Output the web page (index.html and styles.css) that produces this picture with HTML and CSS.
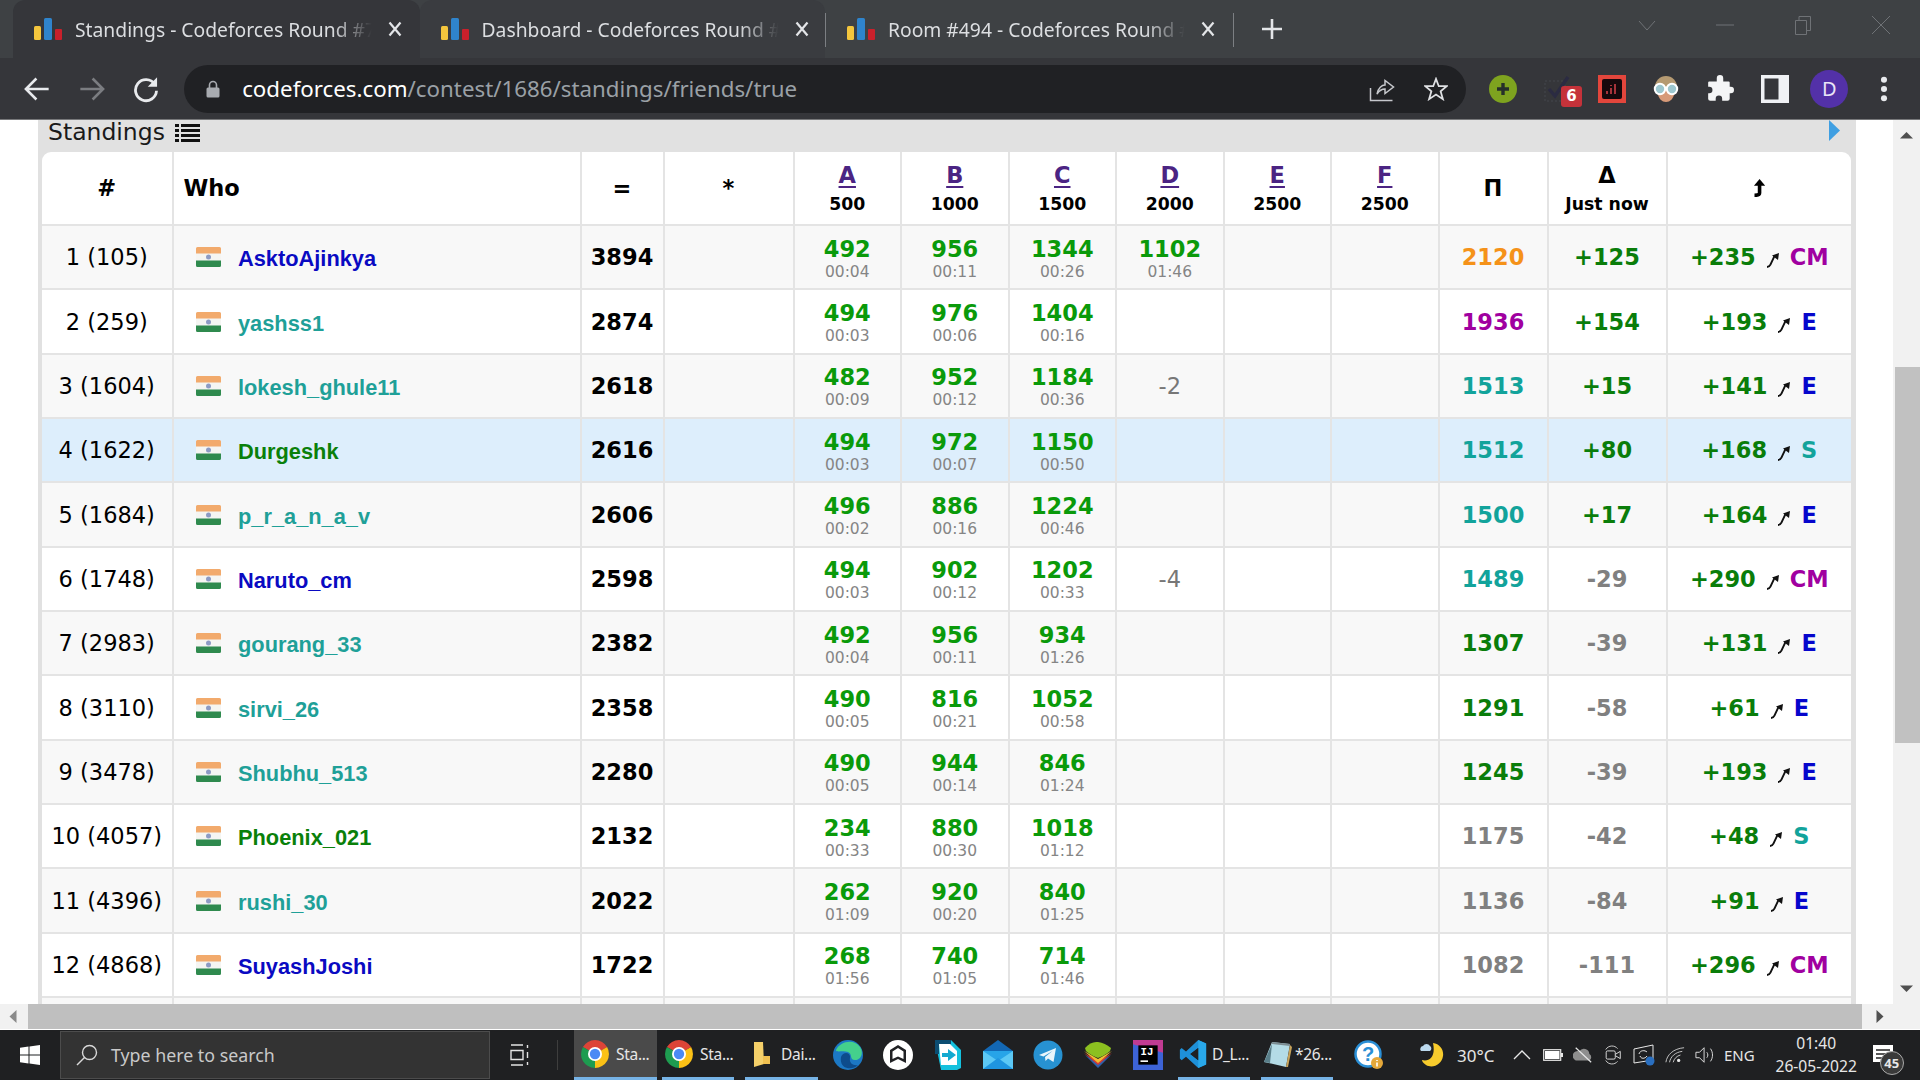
FILE: index.html
```html
<!DOCTYPE html>
<html lang="en">
<head>
    <meta charset="UTF-8">
    <meta name="viewport" content="width=device-width, initial-scale=1.0">
    <title>Standings - Codeforces Round #794 (Div. 2)</title>
    <link rel="stylesheet" href="styles.css">
</head>
<body>
    <svg class="defs" width="0" height="0">
        <symbol id="fav" viewBox="0 0 28 22">
            <rect x="0" y="8" width="7" height="14" rx="1.5" fill="#f4c63d"/>
            <rect x="10" y="0" width="8" height="22" rx="1.5" fill="#2f84cc"/>
            <rect x="21" y="11" width="7" height="11" rx="1" fill="#c9202b"/>
        </symbol>
        <symbol id="close" viewBox="0 0 14 16">
            <path d="M1.5 1.5 12.5 14.5M12.5 1.5 1.5 14.5" stroke="#e3e5e8" stroke-width="2.2" fill="none"/>
        </symbol>
        <symbol id="flag" viewBox="0 0 25 20">
            <rect x="0" y="0" width="25" height="20" rx="1.5" fill="#f5f5f2"/>
            <path d="M0 1.5A1.5 1.5 0 0 1 1.500 0h22A1.500 1.500 0 0 1 25 1.500V6.500H0z" fill="#f2aa6c"/>
            <path d="M0 13.500H25V18.500A1.500 1.500 0 0 1 23.500 20h-22A1.500 1.500 0 0 1 0 18.500z" fill="#2f8a4e"/>
            <circle cx="12.500" cy="10" r="2.500" fill="#8d9bc4"/>
        </symbol>
        <symbol id="rise" viewBox="0 0 14 16">
            <path d="M1 15C2.500 15 3.500 14.500 4.500 12.500L8.500 4" stroke="#111" stroke-width="1.800" fill="none"/>
            <path d="M6 3.500 13 1 12 8z" fill="#111"/>
        </symbol>
        <symbol id="chrome" viewBox="0 0 28 28">
            <path d="M14 14 1.900 7A14 14 0 0 1 26.100 7z" fill="#dd4437"/>
            <path d="M14 14 1.900 7A14 14 0 0 0 14 28z" fill="#1e9c50"/>
            <path d="M14 14 26.100 7A14 14 0 0 1 14 28z" fill="#fbc116"/>
            <circle cx="14" cy="14" r="7" fill="#fff"/>
            <circle cx="14" cy="14" r="5.200" fill="#4a8af4"/>
        </symbol>
    </svg>

    <div class="tabstrip">
        <div class="tab tab-active">
            <svg class="fav"><use href="#fav"/></svg>
            <span class="tab-title">Standings - Codeforces Round #7</span>
            <svg class="tab-close"><use href="#close"/></svg>
        </div>
        <div class="tab tab-dim">
            <svg class="fav"><use href="#fav"/></svg>
            <span class="tab-title">Dashboard - Codeforces Round #</span>
            <svg class="tab-close"><use href="#close"/></svg>
        </div>
        <div class="tab-sep"></div>
        <div class="tab">
            <svg class="fav"><use href="#fav"/></svg>
            <span class="tab-title">Room #494 - Codeforces Round #</span>
            <svg class="tab-close"><use href="#close"/></svg>
        </div>
        <div class="tab-sep"></div>
        <svg class="new-tab" viewBox="0 0 22 22"><path d="M11 1V21M1 11H21" stroke="#e3e5e8" stroke-width="2.600"/></svg>
        <div class="win-controls">
            <span class="win-btn"><svg viewBox="0 0 20 20"><path d="M2 6 10 15 18 6" stroke="#6f7276" fill="none"/></svg></span>
            <span class="win-btn"><svg viewBox="0 0 20 20"><path d="M1 10H19" stroke="#6f7276"/></svg></span>
            <span class="win-btn"><svg viewBox="0 0 20 20"><path d="M2.500 5.500H13.500V19.500H2.500zM6 5.500V1.500H17.500V15.500H13.500" stroke="#6f7276" fill="none"/></svg></span>
            <span class="win-btn"><svg viewBox="0 0 20 20"><path d="M1 1 19 19M19 1 1 19" stroke="#6f7276" fill="none"/></svg></span>
        </div>
    </div>

    <div class="toolbar">
        <span class="tool"><svg viewBox="0 0 24 24"><path d="M22 12H3M11.500 3 2.500 12l9 9" stroke="#e8eaed" stroke-width="2.200" fill="none"/></svg></span>
        <span class="tool"><svg viewBox="0 0 24 24"><path d="M2 12H21M12.500 3l9 9-9 9" stroke="#7b7d81" stroke-width="2.200" fill="none"/></svg></span>
        <span class="tool"><svg viewBox="0 0 24 24"><path d="M19.500 8A9 9 0 1 0 21 13.500" stroke="#e8eaed" stroke-width="2.400" fill="none"/><path d="M21.500 2V10H13.500z" fill="#e8eaed"/></svg></span>
        <div class="omnibox">
            <svg class="lock" viewBox="0 0 14 18"><path d="M3.500 8V5a3.500 3.500 0 0 1 7 0V8" stroke="#a8abb0" stroke-width="1.600" fill="none"/><rect x="0.500" y="7.500" width="13" height="10" rx="1.500" fill="#a8abb0"/></svg>
            <span class="url"><b>codeforces.com</b>/contest/1686/standings/friends/true</span>
            <svg class="omni-icon omni-share" viewBox="0 0 26 26"><path d="M1.500 12V24.500H23.500M8 18C9 12 13 9 16 9V4.500L24.500 11 16 17.500V13C13 13 10 15 8 18z" stroke="#c6c8cc" stroke-width="1.500" fill="none"/></svg>
            <svg class="omni-icon omni-star" viewBox="0 0 26 26"><path d="M13 2 16 10H24.500L18 15.500 20.500 24 13 19 5.500 24 8 15.500 1.500 10H10z" stroke="#dfe1e4" stroke-width="1.900" fill="none"/></svg>
        </div>
        <div class="ext-row">
            <span class="tool"><svg viewBox="0 0 28 28"><circle cx="14" cy="14" r="14" fill="#7ea31f"/><path d="M14 8V20M8 14H20" stroke="#26302a" stroke-width="3.400"/></svg></span>
            <span class="tool tool-badge">
                <svg viewBox="0 0 28 28"><rect x="2" y="6" width="20" height="20" stroke="#44464c" stroke-dasharray="2 2" fill="none"/><path d="M6 14 12 21 25 2" stroke="#2b2b42" stroke-width="3.400" fill="none"/></svg>
                <span class="badge">6</span>
            </span>
            <span class="tool"><svg viewBox="0 0 28 28"><rect width="28" height="28" fill="#e3463c"/><rect x="4" y="4" width="20" height="20" rx="2" fill="#16090c"/><path d="M9 19V16M13 19V13M13 11V10M17 19V9" stroke="#a6333a" stroke-width="2"/></svg></span>
            <span class="tool"><svg viewBox="0 0 28 28"><circle cx="14" cy="12" r="11" fill="#b59a72"/><path d="M5 15C6 24 10 27 14 27S22 24 23 15z" fill="#d79a78"/><circle cx="8" cy="14" r="5.200" fill="#9dc7cf" stroke="#fff" stroke-width="2"/><circle cx="20" cy="14" r="5.200" fill="#9dc7cf" stroke="#fff" stroke-width="2"/></svg></span>
            <span class="tool"><svg viewBox="0 0 26 26"><path d="M10 3a3 3 0 0 1 6 0V6H21a1 1 0 0 1 1 1V11h1a3 3 0 0 1 0 6H22v5a2 2 0 0 1-2 2H15V22a3 3 0 0 0-6 0v2H4a2 2 0 0 1-2-2V17H3a3 3 0 0 0 0-6H2V7A1 1 0 0 1 3 6H10z" fill="#f4f5f6"/></svg></span>
            <span class="tool"><svg viewBox="0 0 24 24"><rect width="24" height="24" fill="#eff1f4"/><rect x="3" y="3" width="12" height="18" fill="#35363a"/></svg></span>
            <span class="tool"><span class="profile">D</span></span>
            <span class="tool"><svg viewBox="0 0 24 24"><circle cx="12" cy="4" r="2.600" fill="#e8eaed"/><circle cx="12" cy="12" r="2.600" fill="#e8eaed"/><circle cx="12" cy="20" r="2.600" fill="#e8eaed"/></svg></span>
        </div>
    </div>

    <div class="viewport">
        <div class="content">
            <div class="panel">
                <div class="panel-head">
                    <span class="panel-title">Standings</span>
                    <svg class="list-icon" viewBox="0 0 25 18"><path d="M0 0H4V3H0zM6 0H25V3H6zM0 5H4V8H0zM6 5H25V8H6zM0 10H4V13H0zM6 10H25V13H6zM0 15H4V18H0zM6 15H25V18H6z" fill="#111"/></svg>
                    <svg class="next-icon" viewBox="0 0 11 21"><path d="M0 0 11 10.500 0 21z" fill="#3f9fe2"/></svg>
                </div>
                <table class="standings">
                    <colgroup>
                        <col class="c-rank"><col class="c-who"><col class="c-eq"><col class="c-star">
                        <col class="c-prob"><col class="c-prob"><col class="c-prob"><col class="c-prob"><col class="c-prob"><col class="c-prob">
                        <col class="c-pi"><col class="c-delta"><col class="c-rise">
                    </colgroup>
                    <thead>
                        <tr>
                            <th>#</th>
                            <th class="who-head">Who</th>
                            <th>=</th>
                            <th>*</th>
                            <th class="two"><a>A</a><small>500</small></th>
                            <th class="two"><a>B</a><small>1000</small></th>
                            <th class="two"><a>C</a><small>1500</small></th>
                            <th class="two"><a>D</a><small>2000</small></th>
                            <th class="two"><a>E</a><small>2500</small></th>
                            <th class="two"><a>F</a><small>2500</small></th>
                            <th>&Pi;</th>
                            <th class="two">&Delta;<small>Just now</small></th>
                            <th><svg class="up-icon" viewBox="0 0 12 16"><path d="M6.500 4V12.500C6.500 14 5 14.500 2 14.500" stroke="#000" stroke-width="3.200" fill="none"/><path d="M6.500 0 11.500 6H1.500z" fill="#000"/></svg></th>
                        </tr>
                    </thead>
                    <tbody>
                        <tr>
                            <td class="rank">1 (105)</td>
                            <td class="who"><svg class="flag"><use href="#flag"/></svg><span class="rated-blue">AsktoAjinkya</span></td>
                            <td class="total">3894</td><td></td>
                            <td class="ok">492<small>00:04</small></td>
                            <td class="ok">956<small>00:11</small></td>
                            <td class="ok">1344<small>00:26</small></td>
                            <td class="ok">1102<small>01:46</small></td>
                            <td></td><td></td>
                            <td class="total t-orange">2120</td>
                            <td class="total t-up">+125</td>
                            <td class="total t-up">+235<svg class="rise"><use href="#rise"/></svg><span class="t-purple">CM</span></td>
                        </tr>
                        <tr>
                            <td class="rank">2 (259)</td>
                            <td class="who"><svg class="flag"><use href="#flag"/></svg><span class="rated-cyan">yashss1</span></td>
                            <td class="total">2874</td><td></td>
                            <td class="ok">494<small>00:03</small></td>
                            <td class="ok">976<small>00:06</small></td>
                            <td class="ok">1404<small>00:16</small></td>
                            <td></td><td></td><td></td>
                            <td class="total t-purple">1936</td>
                            <td class="total t-up">+154</td>
                            <td class="total t-up">+193<svg class="rise"><use href="#rise"/></svg><span class="t-blue">E</span></td>
                        </tr>
                        <tr>
                            <td class="rank">3 (1604)</td>
                            <td class="who"><svg class="flag"><use href="#flag"/></svg><span class="rated-cyan">lokesh_ghule11</span></td>
                            <td class="total">2618</td><td></td>
                            <td class="ok">482<small>00:09</small></td>
                            <td class="ok">952<small>00:12</small></td>
                            <td class="ok">1184<small>00:36</small></td>
                            <td class="wrong">-2</td>
                            <td></td><td></td>
                            <td class="total t-cyan">1513</td>
                            <td class="total t-up">+15</td>
                            <td class="total t-up">+141<svg class="rise"><use href="#rise"/></svg><span class="t-blue">E</span></td>
                        </tr>
                        <tr class="me">
                            <td class="rank">4 (1622)</td>
                            <td class="who"><svg class="flag"><use href="#flag"/></svg><span class="rated-green">Durgeshk</span></td>
                            <td class="total">2616</td><td></td>
                            <td class="ok">494<small>00:03</small></td>
                            <td class="ok">972<small>00:07</small></td>
                            <td class="ok">1150<small>00:50</small></td>
                            <td></td><td></td><td></td>
                            <td class="total t-cyan">1512</td>
                            <td class="total t-up">+80</td>
                            <td class="total t-up">+168<svg class="rise"><use href="#rise"/></svg><span class="t-cyan">S</span></td>
                        </tr>
                        <tr>
                            <td class="rank">5 (1684)</td>
                            <td class="who"><svg class="flag"><use href="#flag"/></svg><span class="rated-cyan">p_r_a_n_a_v</span></td>
                            <td class="total">2606</td><td></td>
                            <td class="ok">496<small>00:02</small></td>
                            <td class="ok">886<small>00:16</small></td>
                            <td class="ok">1224<small>00:46</small></td>
                            <td></td><td></td><td></td>
                            <td class="total t-cyan">1500</td>
                            <td class="total t-up">+17</td>
                            <td class="total t-up">+164<svg class="rise"><use href="#rise"/></svg><span class="t-blue">E</span></td>
                        </tr>
                        <tr>
                            <td class="rank">6 (1748)</td>
                            <td class="who"><svg class="flag"><use href="#flag"/></svg><span class="rated-blue">Naruto_cm</span></td>
                            <td class="total">2598</td><td></td>
                            <td class="ok">494<small>00:03</small></td>
                            <td class="ok">902<small>00:12</small></td>
                            <td class="ok">1202<small>00:33</small></td>
                            <td class="wrong">-4</td>
                            <td></td><td></td>
                            <td class="total t-cyan">1489</td>
                            <td class="total t-down">-29</td>
                            <td class="total t-up">+290<svg class="rise"><use href="#rise"/></svg><span class="t-purple">CM</span></td>
                        </tr>
                        <tr>
                            <td class="rank">7 (2983)</td>
                            <td class="who"><svg class="flag"><use href="#flag"/></svg><span class="rated-cyan">gourang_33</span></td>
                            <td class="total">2382</td><td></td>
                            <td class="ok">492<small>00:04</small></td>
                            <td class="ok">956<small>00:11</small></td>
                            <td class="ok">934<small>01:26</small></td>
                            <td></td><td></td><td></td>
                            <td class="total t-up">1307</td>
                            <td class="total t-down">-39</td>
                            <td class="total t-up">+131<svg class="rise"><use href="#rise"/></svg><span class="t-blue">E</span></td>
                        </tr>
                        <tr>
                            <td class="rank">8 (3110)</td>
                            <td class="who"><svg class="flag"><use href="#flag"/></svg><span class="rated-cyan">sirvi_26</span></td>
                            <td class="total">2358</td><td></td>
                            <td class="ok">490<small>00:05</small></td>
                            <td class="ok">816<small>00:21</small></td>
                            <td class="ok">1052<small>00:58</small></td>
                            <td></td><td></td><td></td>
                            <td class="total t-up">1291</td>
                            <td class="total t-down">-58</td>
                            <td class="total t-up">+61<svg class="rise"><use href="#rise"/></svg><span class="t-blue">E</span></td>
                        </tr>
                        <tr>
                            <td class="rank">9 (3478)</td>
                            <td class="who"><svg class="flag"><use href="#flag"/></svg><span class="rated-cyan">Shubhu_513</span></td>
                            <td class="total">2280</td><td></td>
                            <td class="ok">490<small>00:05</small></td>
                            <td class="ok">944<small>00:14</small></td>
                            <td class="ok">846<small>01:24</small></td>
                            <td></td><td></td><td></td>
                            <td class="total t-up">1245</td>
                            <td class="total t-down">-39</td>
                            <td class="total t-up">+193<svg class="rise"><use href="#rise"/></svg><span class="t-blue">E</span></td>
                        </tr>
                        <tr>
                            <td class="rank">10 (4057)</td>
                            <td class="who"><svg class="flag"><use href="#flag"/></svg><span class="rated-green">Phoenix_021</span></td>
                            <td class="total">2132</td><td></td>
                            <td class="ok">234<small>00:33</small></td>
                            <td class="ok">880<small>00:30</small></td>
                            <td class="ok">1018<small>01:12</small></td>
                            <td></td><td></td><td></td>
                            <td class="total t-down">1175</td>
                            <td class="total t-down">-42</td>
                            <td class="total t-up">+48<svg class="rise"><use href="#rise"/></svg><span class="t-cyan">S</span></td>
                        </tr>
                        <tr>
                            <td class="rank">11 (4396)</td>
                            <td class="who"><svg class="flag"><use href="#flag"/></svg><span class="rated-cyan">rushi_30</span></td>
                            <td class="total">2022</td><td></td>
                            <td class="ok">262<small>01:09</small></td>
                            <td class="ok">920<small>00:20</small></td>
                            <td class="ok">840<small>01:25</small></td>
                            <td></td><td></td><td></td>
                            <td class="total t-down">1136</td>
                            <td class="total t-down">-84</td>
                            <td class="total t-up">+91<svg class="rise"><use href="#rise"/></svg><span class="t-blue">E</span></td>
                        </tr>
                        <tr>
                            <td class="rank">12 (4868)</td>
                            <td class="who"><svg class="flag"><use href="#flag"/></svg><span class="rated-blue">SuyashJoshi</span></td>
                            <td class="total">1722</td><td></td>
                            <td class="ok">268<small>01:56</small></td>
                            <td class="ok">740<small>01:05</small></td>
                            <td class="ok">714<small>01:46</small></td>
                            <td></td><td></td><td></td>
                            <td class="total t-down">1082</td>
                            <td class="total t-down">-111</td>
                            <td class="total t-up">+296<svg class="rise"><use href="#rise"/></svg><span class="t-purple">CM</span></td>
                        </tr>
                        <tr>
                            <td></td><td></td><td></td><td></td><td></td><td></td><td></td><td></td><td></td><td></td><td></td><td></td><td></td>
                        </tr>
                    </tbody>
                </table>
            </div>
        </div>
        <div class="vscroll">
            <svg class="sb-arrow" viewBox="0 0 27 30"><path d="M7 18.500 13.500 12 20 18.500z" fill="#505050"/></svg>
            <div class="vthumb"></div>
            <svg class="sb-arrow sb-end" viewBox="0 0 27 30"><path d="M7 11.500 13.500 18 20 11.500z" fill="#505050"/></svg>
        </div>
    </div>

    <div class="hscroll">
        <svg class="sb-h" viewBox="0 0 28 25"><path d="M16.500 6V19L9.500 12.500z" fill="#8a8a8a"/></svg>
        <div class="hthumb"></div>
        <svg class="sb-h sb-h-right" viewBox="0 0 31 25"><path d="M14.500 6V19L21.500 12.500z" fill="#505050"/></svg>
    </div>

    <div class="taskbar">
        <span class="start"><svg viewBox="0 0 20 20"><path d="M0 2.800 8.500 1.600V9.500H0zM9.500 1.500 20 0V9.500H9.500zM0 10.500H8.500V18.400L0 17.200zM9.500 10.500H20V20L9.500 18.500z" fill="#fff"/></svg></span>
        <div class="search">
            <svg viewBox="0 0 22 22"><circle cx="13.500" cy="8.500" r="7" stroke="#d9d9d9" stroke-width="1.400" fill="none"/><path d="M8.500 13.500 1 21" stroke="#d9d9d9" stroke-width="1.500"/></svg>
            <span>Type here to search</span>
        </div>
        <span class="taskview"><svg viewBox="0 0 20 22"><path d="M1 1H13M1 21H13M1 6.500H13V15.500H1zM17.500 1V4M17.500 8V14M17.500 18V21" stroke="#e4e4e4" stroke-width="1.400" fill="none"/></svg></span>
        <span class="task-div"></span>
        <div class="task task-on task-1"><svg class="task-ico"><use href="#chrome"/></svg><span>Sta...</span></div>
        <div class="task task-2"><svg class="task-ico"><use href="#chrome"/></svg><span>Sta...</span></div>
        <div class="task task-3">
            <svg class="task-ico" viewBox="0 0 28 28"><path d="M7 2H16L17 24 7 27z" fill="#f5d06a"/><path d="M16 16H23V24H16z" fill="#f0c050"/></svg>
            <span>Dai...</span>
        </div>
        <span class="pin"><svg viewBox="0 0 30 30"><circle cx="15" cy="15" r="15" fill="#1c78c4"/><path d="M3 10C7 2 20-2 27 7 31 13 28 20 22 20 16 20 20 14 15 12 10 10 3 13 3 10z" fill="#44d08c"/><path d="M8 17C10 11 18 12 17 18 16 23 20 26 25 25 19 31 6 29 8 17z" fill="#0d4c8c"/></svg></span>
        <span class="pin"><svg viewBox="0 0 30 30"><circle cx="15" cy="15" r="15" fill="#fff"/><path d="M15 5 23 10V23L15 19 7 23V10z" fill="#202124"/><path d="M15 8 20.500 11.500V19L15 16.500 9.500 19V11.500z" fill="#fff"/></svg></span>
        <span class="pin"><svg viewBox="0 0 30 30"><path d="M2 0H18L28 10V28L24 30H8z" fill="#14c1de"/><path d="M2 0H18V4H6V14H2z" fill="#0b4d72"/><path d="M6 4H17L24 11V25H8z" fill="#fff"/><path d="M9 13H15V9L23 15 15 21V17H9z" fill="#14a9d0"/></svg></span>
        <span class="pin"><svg viewBox="0 0 30 30"><path d="M0 11 15 0 30 11V29H0z" fill="#1368b5"/><path d="M0 11H30V29H0z" fill="#27a4e8"/><path d="M0 11 15 21 30 11V29H0z" fill="#5cc8f5"/><path d="M0 29 15 18 30 29z" fill="#1f95e0"/></svg></span>
        <span class="pin"><svg viewBox="0 0 30 30"><circle cx="15" cy="15" r="14.500" fill="#2792d2"/><path d="M6 15 23 8 20.500 22 15 18.500 12.500 21 12 17 19.500 11 10.500 16.500z" fill="#e9f5fb"/></svg></span>
        <span class="pin"><svg viewBox="0 0 30 30"><path d="M2 15 15 23 28 15 15 28z" fill="#2f5fa8"/><path d="M1 13 15 21 29 13 15 25z" fill="#d63c34"/><path d="M1 11 15 19 29 11 15 23z" fill="#f0bf30"/><path d="M2 8Q8 1 15 2T28 8Q28 13 15 18 2 13 2 8z" fill="#8cc020"/></svg></span>
        <span class="pin"><svg viewBox="0 0 28 28"><rect width="28" height="28" fill="#3d63d6"/><path d="M0 0H28V12L0 4z" fill="#c13b92"/><rect x="5" y="5" width="18" height="18" fill="#000"/><text class="ij" x="7" y="14">IJ</text><rect x="7" y="19" width="7" height="1.500" fill="#fff"/></svg></span>
        <div class="task task-4">
            <svg class="task-ico" viewBox="0 0 30 32"><path d="M21 0 30 4V28L21 32 7 19 2 23 0 21V11L2 9 7 13zM21 9 12 16 21 23z" fill="#1e90d8"/><path d="M21 0 30 4V28L21 32z" fill="#29a8ea"/><path d="M21 9V23L12 16z" fill="#1f2022"/></svg>
            <span>D_L...</span>
        </div>
        <div class="task task-5">
            <svg class="task-ico" viewBox="0 0 28 28"><path d="M8 2 26 4 22 27 0 22z" fill="#b4dbe6"/><path d="M8 2 26 4 26 6 8 4z" fill="#7c8c92"/><path d="M8 4 0 22 6 23z" fill="#5a7f8a"/><path d="M26 5 28 7 24 27 22 27z" fill="#c7a25a"/></svg>
            <span>*26...</span>
        </div>
        <span class="pin"><svg viewBox="0 0 30 30"><circle cx="14" cy="14" r="12.500" fill="#fff" stroke="#2a8fd6" stroke-width="2.500"/><text class="help" x="14" y="21">?</text><circle cx="23" cy="23" r="6" fill="#e5a83a"/><path d="M23 20V21M23 22.500V26.500" stroke="#fff" stroke-width="1.600"/></svg></span>
        <div class="tray">
            <svg class="moon" viewBox="0 0 26 26"><path d="M15 1C22 2 26 8 25 14 24 22 15 27 8 23 5 21 4 19 4 18 11 20 18 15 15 1z" fill="#f7cb2d"/><path d="M3 9H12A3 3 0 0 0 12 4 4 4 0 0 0 5 4 3 3 0 0 0 3 9z" fill="#bcd9ee"/></svg>
            <span class="temp">30°C</span>
            <svg class="tray-ico chev" viewBox="0 0 18 10"><path d="M1 9 9 1 17 9" stroke="#e8e8e8" stroke-width="1.300" fill="none"/></svg>
            <svg class="tray-ico" viewBox="0 0 20 14"><rect x="0.700" y="1.700" width="17" height="10.600" stroke="#e8e8e8" stroke-width="1.200" fill="none"/><rect x="2" y="3" width="14.500" height="8" fill="#fff"/><rect x="18" y="5" width="2" height="4" fill="#e8e8e8"/></svg>
            <svg class="tray-ico" viewBox="0 0 22 18"><path d="M3 15H18A4 4 0 0 0 18 8 6 6 0 0 0 7 5 5 5 0 0 0 3 15z" fill="#8e8e8e"/><path d="M3 1 20 17" stroke="#e8e8e8" stroke-width="1.300"/></svg>
            <svg class="tray-ico" viewBox="0 0 20 22"><path d="M2 5C5 0 12 0 15 4M2 17C5 22 12 22 15 18" stroke="#d8d8d8" fill="none"/><rect x="2.500" y="6.500" width="10" height="9" rx="1.500" stroke="#e8e8e8" fill="none"/><path d="M13 10 18 7V15L13 12" stroke="#e8e8e8" fill="none"/></svg>
            <svg class="tray-ico tray-sync" viewBox="0 0 22 22"><path d="M1 5 20 1V16L1 19z" stroke="#e8e8e8" fill="none"/><path d="M6 10C7 6 12 6 14 8M14 12C12 15 8 15 7 12" stroke="#e8e8e8" fill="none"/><circle cx="17" cy="17" r="4.500" fill="#2a6fc0"/></svg>
            <svg class="tray-ico" viewBox="0 0 22 18"><path d="M1 17C2 9 9 2 21 1M5 17C6 11 11 6 19 5M9 17C10 13 13 10 17 9" stroke="#d0d0d0" fill="none"/><circle cx="15" cy="15" r="1.800" fill="#e8e8e8"/></svg>
            <svg class="tray-ico" viewBox="0 0 22 20"><path d="M1 7H5L10 2V18L5 13H1z" stroke="#e8e8e8" fill="none"/><path d="M13 7C14.500 9 14.500 11 13 13M17 3C20 7 20 13 17 17" stroke="#e8e8e8" fill="none"/></svg>
            <span class="lang">ENG</span>
            <div class="clock"><span>01:40</span><span>26-05-2022</span></div>
            <div class="notif">
                <svg viewBox="0 0 22 20"><path d="M0 0H20V17H0z" fill="#fff"/><path d="M3 5H17M3 9H17M3 13H12" stroke="#222" stroke-width="1.300"/></svg>
                <span class="notif-count">45</span>
            </div>
        </div>
    </div>
</body>
</html>
```

FILE: styles.css
```css
* {
    box-sizing: border-box;
}
html, body {
    margin: 0;
    height: 100%;
    overflow: hidden;
}
body {
    width: 1920px;
    height: 1080px;
    display: flex;
    flex-direction: column;
    font-family: "DejaVu Sans", Verdana, sans-serif;
    background-color: #fff;
}
.defs {
    position: absolute;
}
svg {
    display: block;
    flex-shrink: 0;
}

/* tabs */
.tabstrip {
    height: 58px;
    flex-shrink: 0;
    display: flex;
    align-items: flex-start;
    padding-left: 13px;
    background-color: #3e4144;
}
.tab {
    width: 406.5px;
    height: 58px;
    flex-shrink: 0;
    display: flex;
    align-items: center;
    padding-left: 21px;
    border-radius: 12px 12px 0 0;
    color: #dcdee1;
    font-family: "Noto Sans", sans-serif;
    font-size: 19.3px;
}
.tab-active {
    background-color: #35363a;
}
.tab-dim {
    width: 405.5px;
    background-color: #3a3c40;
}
.tab .fav {
    width: 28px;
    height: 22px;
    margin-right: 13px;
}
.tab-title {
    width: 306px;
    white-space: nowrap;
    -webkit-mask-image: linear-gradient(to right, #000 84%, transparent 97%);
    mask-image: linear-gradient(to right, #000 84%, transparent 97%);
}
.tab-close {
    width: 14px;
    height: 16px;
    margin-left: 7px;
}
.tab-sep {
    width: 1px;
    height: 34px;
    margin-top: 13px;
    flex-shrink: 0;
    background-color: #7c7f83;
}
.new-tab {
    width: 22px;
    height: 22px;
    margin: 18px 0 0 27px;
}
.win-controls {
    margin-left: auto;
    display: flex;
    height: 50px;
}
.win-btn {
    width: 78px;
    display: flex;
    align-items: center;
    justify-content: center;
}
.win-btn svg {
    width: 20px;
    height: 20px;
}

/* toolbar */
.toolbar {
    height: 62px;
    flex-shrink: 0;
    display: flex;
    align-items: center;
    padding: 0 0 0 10px;
    background-color: #35363a;
    border-bottom: 1px solid #77787a;
}
.tool {
    width: 54.4px;
    height: 48px;
    flex-shrink: 0;
    display: flex;
    align-items: center;
    justify-content: center;
    position: relative;
}
.tool svg {
    width: 28px;
    height: 28px;
}
.omnibox {
    width: 1281.5px;
    height: 48px;
    margin-left: 11px;
    display: flex;
    align-items: center;
    padding-left: 22px;
    background-color: #202124;
    border-radius: 24px;
    color: #9aa0a6;
    font-family: "Noto Sans", sans-serif;
    font-size: 22.3px;
}
.lock {
    width: 14px;
    height: 18px;
    margin-right: 22px;
}
.url b {
    font-weight: 400;
    color: #fff;
}
.omni-icon {
    width: 26px;
    height: 26px;
}
.omni-share {
    margin-left: auto;
}
.omni-star {
    width: 24px;
    height: 24px;
    margin: 0 18px 0 29px;
}
.ext-row {
    margin-left: 10px;
    display: flex;
}
.badge {
    position: absolute;
    left: 31px;
    top: 21px;
    width: 21px;
    height: 21px;
    border-radius: 3px;
    background-color: #c5323a;
    color: #fff;
    font-size: 15px;
    font-weight: 700;
    line-height: 21px;
    text-align: center;
}
.profile {
    width: 38px;
    height: 38px;
    border-radius: 50%;
    background-color: #5331a8;
    color: #e9e4f7;
    font-family: "Noto Sans", sans-serif;
    font-size: 20px;
    line-height: 38px;
    text-align: center;
}

/* page */
.viewport {
    flex: 1;
    min-height: 0;
    display: flex;
}
.content {
    flex: 1;
    min-width: 0;
    min-height: 0;
    padding-left: 38px;
    clip-path: inset(-4px 0 0 0);
}
.panel {
    width: 1818px;
    min-height: 100%;
    padding-left: 3.5px;
    background-color: #e1e1e1;
}
.panel-head {
    height: 32px;
    display: flex;
    align-items: center;
    padding: 0 16px 8px 6.5px;
    font-size: 23.5px;
    color: #1a1a1a;
}
.panel-title {
    line-height: 24px;
}
.list-icon {
    width: 25px;
    height: 18px;
    margin: 2px 0 0 10px;
}
.next-icon {
    width: 11px;
    height: 21px;
    margin: -3px 0 0 auto;
}

table.standings {
    width: 1809.5px;
    table-layout: fixed;
    border-collapse: separate;
    border-spacing: 0;
    background-color: #fff;
    border-radius: 9px 9px 0 0;
    overflow: hidden;
}
.c-rank { width: 132.5px; }
.c-who { width: 407.5px; }
.c-eq { width: 83px; }
.c-star { width: 130px; }
.c-prob { width: 107.5px; }
.c-pi { width: 109px; }
.c-delta { width: 119px; }
.c-rise { width: 183.5px; }
th, td {
    padding: 0;
    border-right: 2px solid #e4e4e4;
    border-bottom: 2px solid #e4e4e4;
    text-align: center;
    vertical-align: middle;
    font-size: 22.5px;
    color: #000;
}
th:last-child, td:last-child {
    border-right: 0;
}
thead tr {
    height: 74px;
}
th {
    font-weight: 700;
    line-height: 29px;
}
th.two {
    padding-top: 4px;
}
th a {
    display: block;
    color: #4b2483;
    text-decoration: underline;
    text-underline-offset: 3px;
}
th small, .ok small {
    display: block;
}
th small {
    font-size: 17.3px;
    line-height: 29px;
}
.who-head {
    text-align: left;
    padding-left: 9.5px;
}
.up-icon {
    width: 14px;
    height: 18px;
    margin: 0 auto;
}
tbody tr {
    height: 64.35px;
}
tbody tr:nth-child(odd) {
    background-color: #f8f8f8;
}
tbody tr.me {
    background-color: #ddeefc;
}
.rank {
    font-size: 22.5px;
}
.who {
    text-align: left;
    padding-left: 22px;
    font-family: "Liberation Sans", Arial, sans-serif;
    font-size: 21.8px;
    font-weight: 700;
    white-space: nowrap;
}
.who span {
    position: relative;
    top: 2px;
}
.flag {
    display: inline-block;
    width: 25px;
    height: 20px;
    margin-right: 17px;
    vertical-align: -3px;
}
.total {
    font-weight: 700;
}
.ok {
    padding-top: 7px;
    font-weight: 700;
    line-height: 23px;
    color: #0a9a0a;
}
.ok small {
    font-size: 15.5px;
    font-weight: 400;
    color: #858585;
}
.wrong {
    color: #777;
}
.rated-blue { color: #0a0ac2; }
.rated-cyan { color: #1fa098; }
.rated-green { color: #0a800a; }
.t-orange { color: #f59219; }
.t-purple { color: #a000a0; }
.t-cyan { color: #12a39b; }
.t-blue { color: #0606cc; }
.t-up { color: #0a7d0a; }
.t-down { color: #808080; }
.rise {
    display: inline-block;
    width: 14px;
    height: 16px;
    margin: 0 10px;
    vertical-align: -3px;
}

/* scrollbars */
.vscroll {
    width: 27px;
    flex-shrink: 0;
    display: flex;
    flex-direction: column;
    background-color: #f1f1f1;
}
.sb-arrow {
    width: 27px;
    height: 30px;
}
.sb-end {
    margin-top: auto;
}
.vthumb {
    width: 25px;
    height: 376px;
    margin: 217px 0 0 2px;
    background-color: #c1c1c1;
}
.hscroll {
    height: 26px;
    flex-shrink: 0;
    display: flex;
    background-color: #f1f1f1;
    border-bottom: 1px solid #fff;
}
.sb-h {
    width: 28px;
    height: 25px;
}
.sb-h-right {
    width: 31px;
}
.hthumb {
    width: 1834px;
    height: 25px;
    background-color: #bfbfbf;
}

/* taskbar */
.taskbar {
    height: 50px;
    flex-shrink: 0;
    display: flex;
    align-items: center;
    background-color: #1f2022;
    color: #e6e6e6;
    font-family: "Noto Sans", sans-serif;
    font-size: 15.5px;
}
.start {
    width: 60px;
    display: flex;
    justify-content: center;
}
.start svg {
    width: 20px;
    height: 20px;
}
.search {
    width: 430px;
    height: 48px;
    display: flex;
    align-items: center;
    padding-left: 15px;
    background-color: #333;
    border: 1px solid #4c4c4c;
    font-size: 17.8px;
    color: #c9c9c9;
}
.search svg {
    width: 22px;
    height: 22px;
    margin-right: 13px;
}
.taskview {
    width: 60px;
    display: flex;
    justify-content: center;
}
.taskview svg {
    width: 20px;
    height: 22px;
}
.task-div {
    width: 24px;
    height: 30px;
    border-left: 1px solid #3e3e3e;
    margin-left: 7px;
    margin-right: -7px;
}
.task {
    height: 50px;
    display: flex;
    align-items: center;
    flex-shrink: 0;
    gap: 7px;
    border-bottom: 3px solid #76b3e6;
    white-space: nowrap;
    letter-spacing: -0.3px;
}
.task-ico {
    width: 28px;
    height: 28px;
    flex-shrink: 0;
}
.task-on {
    background-color: #4a4a4a;
}
.task-1 { width: 83px; padding-left: 7px; }
.task-2 { width: 72px; margin-left: 5px; padding-left: 3px; }
.task-3 { width: 73px; margin-left: 11px; padding-left: 2px; gap: 6px; }
.task-4 { width: 72px; margin-left: 5px; gap: 5px; padding-left: 1px; }
.task-5 { width: 72px; margin-left: 11px; padding-left: 3px; gap: 3px; }
.pin {
    width: 50px;
    height: 50px;
    flex-shrink: 0;
    display: flex;
    align-items: center;
    justify-content: center;
}
.pin svg {
    width: 30px;
    height: 30px;
}
.task-3 + .pin {
    margin-left: 5px;
}
.task-5 + .pin {
    margin-left: 11px;
}
.ij {
    fill: #fff;
    font-family: "Liberation Mono", monospace;
    font-size: 10px;
    font-weight: 700;
}
.help {
    fill: #2a8fd6;
    font-family: "Liberation Sans", sans-serif;
    font-size: 20px;
    font-weight: 700;
    text-anchor: middle;
}
.tray {
    flex: 1;
    display: flex;
    align-items: center;
    padding-left: 24px;
}
.moon {
    width: 26px;
    height: 26px;
}
.temp {
    margin: 0 0 0 13px;
    width: 56px;
    font-size: 17px;
}
.tray-ico {
    width: 20px;
    height: 20px;
    margin-right: 10px;
}
.chev {
    width: 18px;
    height: 10px;
    margin-right: 12px;
}
.tray-sync {
    width: 22px;
    height: 22px;
}
.lang {
    margin-left: -1px;
    font-size: 15px;
}
.clock {
    width: 90px;
    margin-left: 16.5px;
    display: flex;
    flex-direction: column;
    align-items: center;
    font-size: 15.6px;
    line-height: 23px;
}
.notif {
    position: relative;
    margin-left: 11.5px;
}
.notif svg {
    width: 22px;
    height: 20px;
}
.notif-count {
    position: absolute;
    left: 7px;
    top: 6px;
    width: 24px;
    height: 24px;
    border: 1px solid #aaa;
    border-radius: 50%;
    background-color: #3a3a3a;
    font-size: 13px;
    font-weight: 700;
    line-height: 22px;
    text-align: center;
}
```
